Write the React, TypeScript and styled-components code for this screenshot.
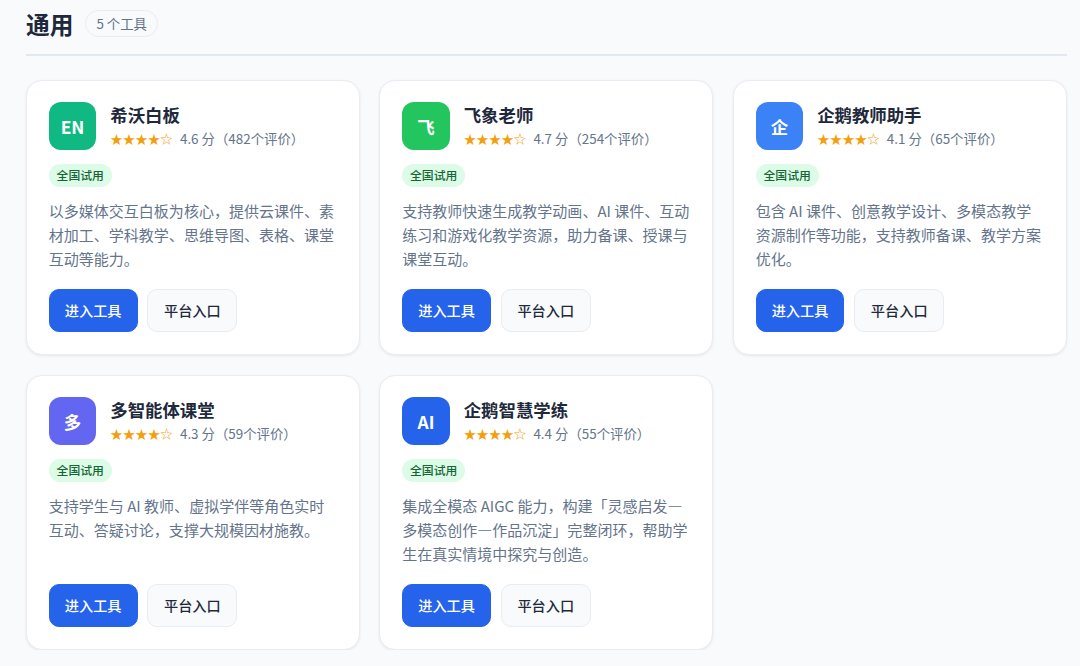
import React from 'react';
import styled, { createGlobalStyle } from 'styled-components';

const Global = createGlobalStyle`
  * { box-sizing: border-box; }
  body { margin: 0; background: #f8fafc; color: #1e293b; font-family: "Noto Sans CJK SC", sans-serif; overflow: hidden; }
  h2, h3, p { margin: 0; }
`;
const Section = styled.section`padding: 0 13.4px 0 26px;`;
const Header = styled.header`
  display: flex; align-items: center; gap: 12px; height: 56px; padding-bottom: 7px;
  border-bottom: 2px solid #e2e8f0; margin-bottom: 24px;
`;
const Title = styled.h2`font-size: 23.7px; line-height: 36px; font-weight: 700;`;
const Count = styled.span`
  height: 27px; padding: 0 10px; border: 1px solid #e8edf4; border-radius: 14px;
  font-size: 13.4px; line-height: 25px; color: #64748b; background: #f8fafc;
`;
const Grid = styled.div`
  display: grid; grid-template-columns: repeat(3, 1fr); grid-auto-rows: 275px; gap: 20px 19.75px;
`;
const Card = styled.article`
  display: flex; flex-direction: column; align-items: flex-start; padding: 21px 21.75px 22px;
  background: #fff; border: 1px solid #e8edf4; border-radius: 16px; box-shadow: 0 1px 3px rgba(15, 23, 42, .08);
`;
const CardHead = styled.div`display: flex; gap: 14px; height: 47.5px;`;
const Logo = styled.div<{ $color: string }>`
  width: 47.5px; height: 47.5px; border-radius: 12px; background: ${p => p.$color}; color: #fff;
  display: flex; align-items: center; justify-content: center; padding-top: 1px; font-size: 17.4px; font-weight: 700;
`;
const Name = styled.h3`font-size: 17.4px; line-height: 25px; font-weight: 700;`;
const Rating = styled.div`display: flex; gap: 7.2px; font-size: 13.4px; line-height: 23px; color: #64748b; white-space: nowrap;`;
const Stars = styled.span`color: #f59e0b; font-size: 12.5px;`;
const Tag = styled.span`
  margin-top: 14px; height: 23px; padding: 0 7.8px; border-radius: 12px; background: #dcfce7;
  color: #166534; font-size: 11.85px; line-height: 22px; font-weight: 500;
`;
const Description = styled.p`
  margin-top: 12px; flex: 1; font-size: 15.03px; line-height: 24px; color: #64748b; white-space: pre;
`;
const Actions = styled.div`display: flex; gap: 9.8px;`;
const Button = styled.button<{ $primary?: boolean }>`
  height: 43px; width: ${p => (p.$primary ? 88.8 : 90)}px; padding: 0 0 2px; border-radius: 10px;
  border: 1px solid ${p => (p.$primary ? '#2563eb' : '#e8edf4')};
  background: ${p => (p.$primary ? '#2563eb' : '#f8fafc')}; color: ${p => (p.$primary ? '#fff' : '#1e293b')};
  font: 500 14.2px "Noto Sans CJK SC", sans-serif;
`;

const tools = [
  { logo: 'EN', color: '#10b981', name: '希沃白板', score: '4.6', count: 482, text: '以多媒体交互白板为核心，提供云课件、素\n材加工、学科教学、思维导图、表格、课堂\n互动等能力。' },
  { logo: '飞', color: '#22c55e', name: '飞象老师', score: '4.7', count: 254, text: '支持教师快速生成教学动画、AI 课件、互动\n练习和游戏化教学资源，助力备课、授课与\n课堂互动。' },
  { logo: '企', color: '#3b82f6', name: '企鹅教师助手', score: '4.1', count: 65, text: '包含 AI 课件、创意教学设计、多模态教学\n资源制作等功能，支持教师备课、教学方案\n优化。' },
  { logo: '多', color: '#6366f1', name: '多智能体课堂', score: '4.3', count: 59, text: '支持学生与 AI 教师、虚拟学伴等角色实时\n互动、答疑讨论，支撑大规模因材施教。' },
  { logo: 'AI', color: '#2563eb', name: '企鹅智慧学练', score: '4.4', count: 55, text: '集成全模态 AIGC 能力，构建「灵感启发—\n多模态创作—作品沉淀」完整闭环，帮助学\n生在真实情境中探究与创造。' },
];

export default function App() {
  return (
    <Section lang="zh-CN">
      <Global />
      <Header><Title>通用</Title><Count>5 个工具</Count></Header>
      <Grid>
        {tools.map(t => (
          <Card key={t.name}>
            <CardHead>
              <Logo $color={t.color}>{t.logo}</Logo>
              <div>
                <Name>{t.name}</Name>
                <Rating><Stars>★★★★☆</Stars><span>{t.score} 分（{t.count}个评价）</span></Rating>
              </div>
            </CardHead>
            <Tag>全国试用</Tag>
            <Description>{t.text}</Description>
            <Actions><Button $primary>进入工具</Button><Button>平台入口</Button></Actions>
          </Card>
        ))}
      </Grid>
    </Section>
  );
}
